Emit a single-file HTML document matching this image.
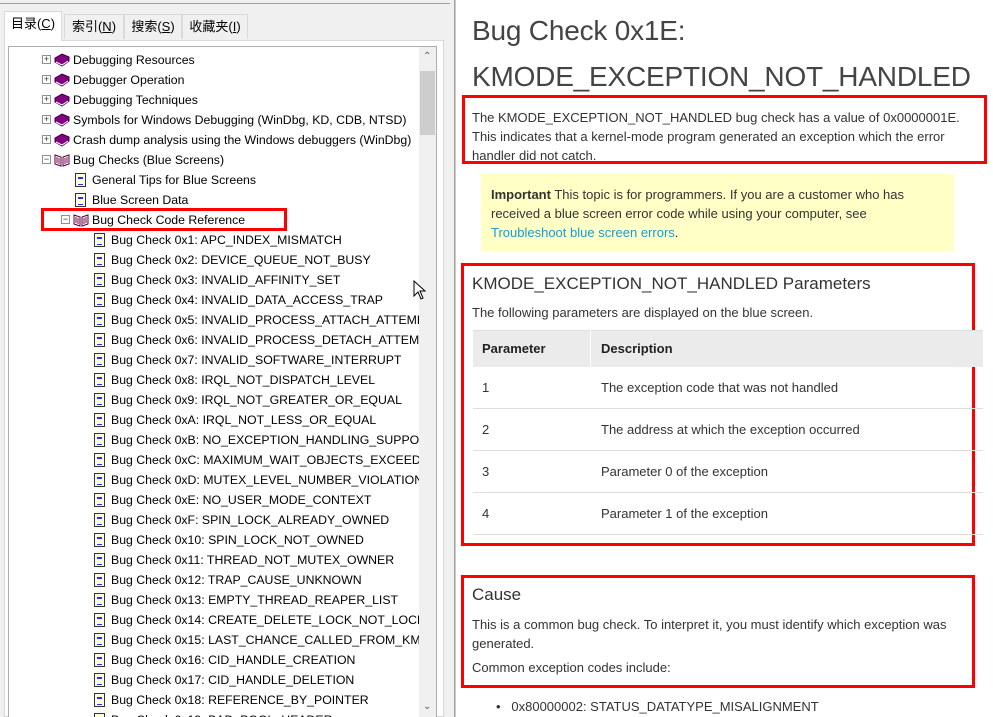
<!DOCTYPE html>
<html><head><meta charset="utf-8"><style>
*{margin:0;padding:0;box-sizing:border-box}
body{width:993px;height:717px;overflow:hidden;background:#f0f0f0;font-family:"Liberation Sans","Noto Sans CJK SC",sans-serif;position:relative}
.tab{position:absolute;top:14px;height:25px;border:1px solid #d9d9d9;border-bottom:none;background:#f0f0f0;font-size:13px;text-align:center;line-height:24px;color:#000}
.tree{position:absolute;left:8px;top:46px;width:429px;height:671px;background:#fff;border:1px solid #adadad;border-bottom:none;overflow:hidden}
.row{position:absolute;height:20px;font-size:12.3px;line-height:20px;color:#000;white-space:nowrap}
.pm{position:absolute;width:9px;height:9px;border:1px solid #919191;background:#fff;font-size:9px;line-height:7px;text-align:center;color:#333}
.book{position:absolute;width:16px;height:14px}
.doc{position:absolute;width:11px;height:14px;border:1px solid #333;background:#fffde0}
.doc:after{content:"";position:absolute;left:2px;top:3px;width:5px;height:6px;border-top:1px solid #2030ff;border-bottom:1px solid #2030ff;box-shadow:inset 0 2px 0 -1px #2030ff}
.sb{position:absolute;left:419px;top:47px;width:17px;height:670px;background:#f0f0f0}
.right{position:absolute;left:455px;top:0;width:538px;height:717px;background:#fff;border-left:1px solid #ccc;font-family:"Liberation Sans",sans-serif;color:#333}
.red{position:absolute;border:3px solid #f00}
p{font-size:13px}
</style></head><body>
<div style="position:absolute;left:440px;top:0;width:15px;height:717px;background:#f0f0f0;border-right:1px solid #a0a0a0"></div>
<div style="position:absolute;left:0;top:3px;width:450px;height:1px;background:#a0a0a0"></div>
<div class="tab" style="left:4px;top:11px;width:58px;height:30px;background:#fff;z-index:2">目录(<u>C</u>)</div>
<div class="tab" style="left:64px;width:60px">索引(<u>N</u>)</div>
<div class="tab" style="left:124px;width:58px">搜索(<u>S</u>)</div>
<div class="tab" style="left:182px;width:66px">收藏夹(<u>I</u>)</div>
<div style="position:absolute;left:4px;top:40px;width:440px;height:677px;background:#fff;border:1px solid #d9d9d9"></div>
<div class="tree" id="tree"></div>
<div class="sb"><div style="position:absolute;left:1px;top:24px;width:15px;height:64px;background:#cdcdcd"></div>
<div style="position:absolute;left:4px;top:4px;font-size:10px;color:#606060">&#8963;</div>
<div style="position:absolute;left:4px;top:654px;font-size:10px;color:#606060">&#8964;</div></div>
<div class="red" style="left:41px;top:208px;width:246px;height:23px;border-width:3px"></div>
<svg style="position:absolute;left:413px;top:280px" width="14" height="20"><path d="M1 1 L1 16 L5 12 L8 19 L10 18 L7 11 L12 11 Z" fill="#fff" stroke="#000"/></svg>
<div class="right">
<div style="position:absolute;left:16px;top:8px;font-size:28px;line-height:46px;color:#444;letter-spacing:-0.2px">Bug Check 0x1E:<br>KMODE_EXCEPTION_NOT_HANDLED</div>
<p style="position:absolute;left:16px;top:108px;width:515px;line-height:19px">The KMODE_EXCEPTION_NOT_HANDLED bug check has a value of 0x0000001E. This indicates that a kernel-mode program generated an exception which the error handler did not catch.</p>
<div class="red" style="left:6px;top:95px;width:525px;height:69px"></div>
<div style="position:absolute;left:25px;top:174px;width:473px;height:77px;background:#ffffc6"></div>
<p style="position:absolute;left:35px;top:185px;width:445px;line-height:19px"><b>Important</b> This topic is for programmers. If you are a customer who has received a blue screen error code while using your computer, see <span style="color:#1a9bd0">Troubleshoot blue screen errors</span>.</p>
<div class="red" style="left:5px;top:263px;width:514px;height:283px"></div>
<div style="position:absolute;left:16px;top:274px;font-size:17px">KMODE_EXCEPTION_NOT_HANDLED Parameters</div>
<p style="position:absolute;left:16px;top:305px">The following parameters are displayed on the blue screen.</p>
<div style="position:absolute;left:17px;top:330px;width:510px;height:37px;background:#ebebeb;border-top:1px solid #ddd"></div>
<div style="position:absolute;left:134px;top:330px;width:1px;height:37px;background:#fff"></div>
<p style="position:absolute;left:26px;top:341px;font-weight:bold;color:#222">Parameter</p>
<p style="position:absolute;left:145px;top:341px;font-weight:bold;color:#222">Description</p>
<div style="position:absolute;left:17px;top:408px;width:510px;height:1px;background:#ddd"></div>
<div style="position:absolute;left:17px;top:450px;width:510px;height:1px;background:#ddd"></div>
<div style="position:absolute;left:17px;top:492px;width:510px;height:1px;background:#ddd"></div>
<div style="position:absolute;left:17px;top:534px;width:510px;height:1px;background:#ddd"></div>
<p style="position:absolute;left:26px;top:380px">1</p><p style="position:absolute;left:145px;top:380px">The exception code that was not handled</p>
<p style="position:absolute;left:26px;top:422px">2</p><p style="position:absolute;left:145px;top:422px">The address at which the exception occurred</p>
<p style="position:absolute;left:26px;top:464px">3</p><p style="position:absolute;left:145px;top:464px">Parameter 0 of the exception</p>
<p style="position:absolute;left:26px;top:506px">4</p><p style="position:absolute;left:145px;top:506px">Parameter 1 of the exception</p>
<div class="red" style="left:5px;top:575px;width:514px;height:113px"></div>
<div style="position:absolute;left:16px;top:585px;font-size:17px">Cause</div>
<p style="position:absolute;left:16px;top:615px;width:510px;line-height:19px">This is a common bug check. To interpret it, you must identify which exception was generated.</p>
<p style="position:absolute;left:16px;top:660px">Common exception codes include:</p>
<p style="position:absolute;left:40px;top:699px">•&nbsp;&nbsp;&nbsp;0x80000002: STATUS_DATATYPE_MISALIGNMENT</p>
</div>
<script>
var rows=[
[1,'b','Debugging Resources'],[1,'b','Debugger Operation'],[1,'b','Debugging Techniques'],
[1,'b','Symbols for Windows Debugging (WinDbg, KD, CDB, NTSD)'],[1,'b','Crash dump analysis using the Windows debuggers (WinDbg)'],
[1,'o','Bug Checks (Blue Screens)'],[2,'d','General Tips for Blue Screens'],[2,'d','Blue Screen Data'],[2,'o','Bug Check Code Reference']];
var bc=['0x1: APC_INDEX_MISMATCH','0x2: DEVICE_QUEUE_NOT_BUSY','0x3: INVALID_AFFINITY_SET','0x4: INVALID_DATA_ACCESS_TRAP','0x5: INVALID_PROCESS_ATTACH_ATTEMPT','0x6: INVALID_PROCESS_DETACH_ATTEMPT','0x7: INVALID_SOFTWARE_INTERRUPT','0x8: IRQL_NOT_DISPATCH_LEVEL','0x9: IRQL_NOT_GREATER_OR_EQUAL','0xA: IRQL_NOT_LESS_OR_EQUAL','0xB: NO_EXCEPTION_HANDLING_SUPPORT','0xC: MAXIMUM_WAIT_OBJECTS_EXCEEDED','0xD: MUTEX_LEVEL_NUMBER_VIOLATION','0xE: NO_USER_MODE_CONTEXT','0xF: SPIN_LOCK_ALREADY_OWNED','0x10: SPIN_LOCK_NOT_OWNED','0x11: THREAD_NOT_MUTEX_OWNER','0x12: TRAP_CAUSE_UNKNOWN','0x13: EMPTY_THREAD_REAPER_LIST','0x14: CREATE_DELETE_LOCK_NOT_LOCKED','0x15: LAST_CHANCE_CALLED_FROM_KMODE','0x16: CID_HANDLE_CREATION','0x17: CID_HANDLE_DELETION','0x18: REFERENCE_BY_POINTER','0x19: BAD_POOL_HEADER'];
bc.forEach(function(s){rows.push([3,'d','Bug Check '+s])});
var h='';
rows.forEach(function(r,i){var y=3+i*20,lv=r[0];
var tx=[0,64,83,102][lv],ix=tx-19,px=ix-12;
if(r[1]!='d')h+='<div class="pm" style="left:'+px+'px;top:'+(y+5)+'px">'+(r[1]=='b'?'+':'−')+'</div>';
if(r[1]=='b')h+='<svg class="book" style="left:'+ix+'px;top:'+(y+3)+'px" viewBox="0 0 16 14"><path d="M1 5 L8 1 L15 4 L15 8 L8 13 L1 9Z" fill="#800080" stroke="#3a003a"/><path d="M2 9 L8 12 L14 8" stroke="#fff" fill="none"/></svg>';
else if(r[1]=='o')h+='<svg class="book" style="left:'+ix+'px;top:'+(y+3)+'px" viewBox="0 0 16 14"><path d="M1 2 L7 4 L7 13 L1 11Z M9 4 L15 2 L15 11 L9 13Z" fill="#fffbd0" stroke="#500050"/><path d="M3 4v6M5 5v6M11 5v6M13 4v6" stroke="#800080"/></svg>';
else h+='<div class="doc" style="left:'+(ix+2)+'px;top:'+(y+3)+'px"></div>';
h+='<div class="row" style="left:'+tx+'px;top:'+y+'px">'+r[2]+'</div>';});
document.getElementById('tree').innerHTML=h;
</script>
</body></html>
